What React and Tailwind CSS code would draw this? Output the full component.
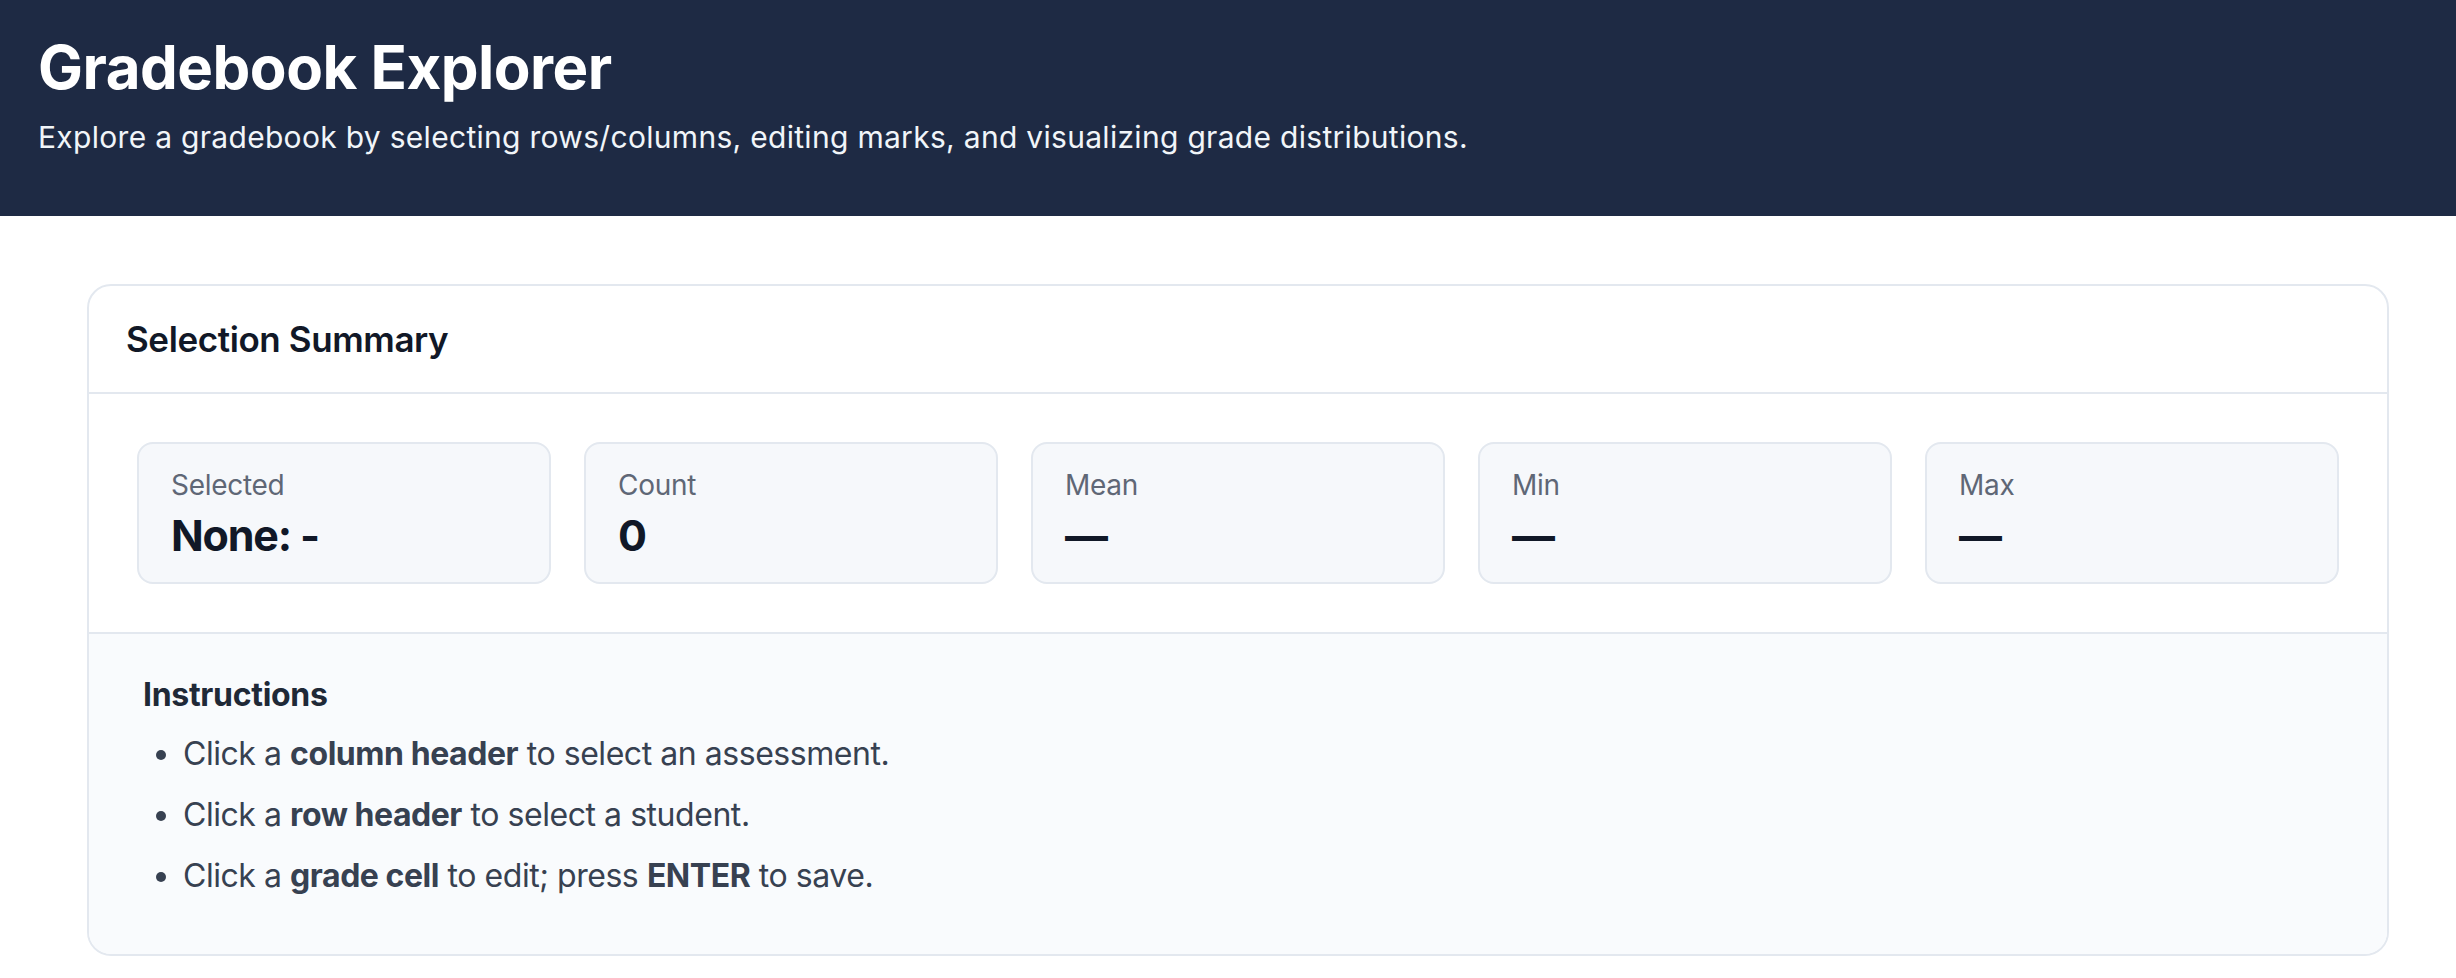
import React from "react";

const stats = [
  { label: "Selected", value: "None: -" },
  { label: "Count", value: "0" },
  { label: "Mean", value: "—" },
  { label: "Min", value: "—" },
  { label: "Max", value: "—" },
];

const StatBox = ({ label, value }) => {
  return (
    <div className="rounded-[16px] border-2 border-[#e3e8ef] bg-[#f6f8fb] px-[32px] pt-[21px] pb-[21px]">
      <div className="text-[28px] leading-[40px] tracking-[-0.3px] text-[#5f6776]">{label}</div>
      <div className="mt-[4px] text-[43px] leading-[52px] font-bold tracking-[-1.2px] text-[#111827]">{value}</div>
    </div>
  );
};

export default function App() {
  return (
    <div className="min-h-screen bg-white font-['Inter','Liberation_Sans',sans-serif]">
      <header className="bg-[#1e2a44] px-[38px] pt-[31px] pb-[56px] h-[216px]">
        <h1 className="text-[60px] leading-[72px] font-bold tracking-[-0.5px] text-white">Gradebook Explorer</h1>
        <p className="mt-[12px] text-[30px] leading-[45px] tracking-[0.3px] text-[#f1f5f9]">
          Explore a gradebook by selecting rows/columns, editing marks, and visualizing grade distributions.
        </p>
      </header>

      <main className="pt-[68px] pl-[87px] pr-[67px]">
        <section className="rounded-[24px] border-2 border-[#e3e8ef] bg-white overflow-hidden">
          <div className="border-b-2 border-[#e3e8ef] px-[37px] py-[26px]">
            <h2 className="text-[35px] leading-[54px] font-semibold tracking-[-0.4px] text-[#111827]">Selection Summary</h2>
          </div>

          {/* stat boxes */}
          <div className="grid grid-cols-5 gap-[33px] px-[48px] pt-[48px] pb-[48px]">
            {stats.map((s) => (
              <StatBox key={s.label} label={s.label} value={s.value} />
            ))}
          </div>

          <div className="border-t-2 border-[#e3e8ef] bg-[#f9fbfd] pl-[54px] pr-[48px] pt-[37px] pb-[54px]">
            <h3 className="text-[32px] leading-[48px] font-bold tracking-[-0.3px] text-[#1f2937]">Instructions</h3>
            <ul className="mt-[11px] list-disc pl-[40px] text-[32px] leading-[48px] tracking-[-0.45px] text-[#374151] marker:text-[#374151]">
              <li className="mb-[13px]">
                Click a <strong className="font-bold">column header</strong> to select an assessment.
              </li>
              <li className="mb-[13px]">
                Click a <strong className="font-bold">row header</strong> to select a student.
              </li>
              <li>
                Click a <strong className="font-bold">grade cell</strong> to edit; press <strong className="font-bold">ENTER</strong> to save.
              </li>
            </ul>
          </div>
        </section>
      </main>
    </div>
  );
}
